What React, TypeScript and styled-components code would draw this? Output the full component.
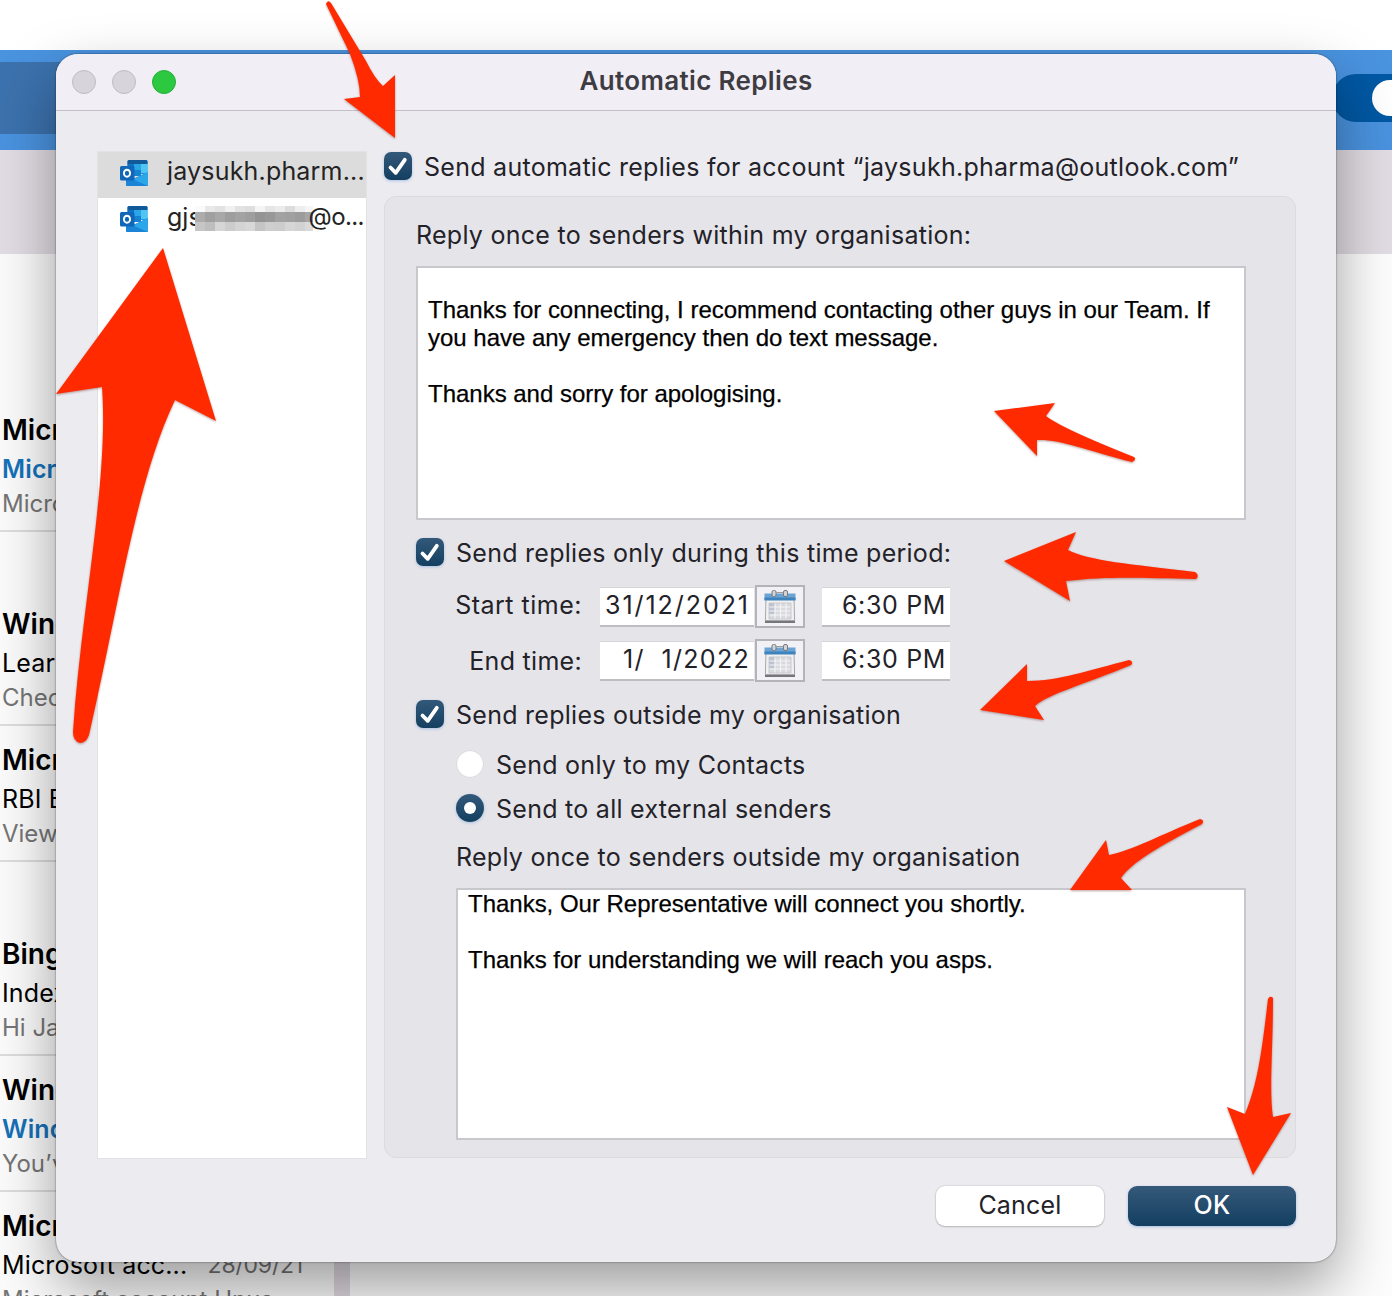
import React from 'react';
import styled, { createGlobalStyle, css } from 'styled-components';

const GlobalStyle = createGlobalStyle`
  * { box-sizing: border-box; }
  body { margin: 0; background: #fff; }
`;

const ui = css`font-family: Inter, 'Liberation Sans', sans-serif;`;

const Screen = styled.div`
  ${ui}
  position: relative;
  width: 1392px;
  height: 1296px;
  overflow: hidden;
  background: #fff;
  color: #232228;
`;

/* Mail window behind the dialog */
const MailWindow = styled.div`
  display: flex;
  flex-direction: column;
  height: 100%;
  padding-top: 50px;
`;
const MailHeader = styled.div`
  display: flex;
  justify-content: space-between;
  height: 100px;
  flex: none;
  background: #4a93df;
`;
const SearchField = styled.div`
  width: 400px;
  height: 72px;
  margin-top: 12px;
  background: #3c72ae;
`;
const Toggle = styled.div`
  display: flex;
  align-items: center;
  justify-content: flex-end;
  width: 82px;
  height: 48px;
  margin: 24px -22px 0 0;
  padding-right: 6px;
  border-radius: 24px;
  background: #0058a4;
`;
const Knob = styled.div`
  width: 36px;
  height: 36px;
  border-radius: 50%;
  background: #fff;
`;
const Ribbon = styled.div`
  height: 104px;
  flex: none;
  background: #e2dde4;
`;
const MailBody = styled.div`
  display: flex;
  flex: 1;
  min-height: 0;
  overflow: hidden;
`;
const MessageList = styled.div`
  width: 334px;
  flex: none;
  padding-top: 142px;
  background: #fbfbfb;
`;
const Splitter = styled.div`
  width: 16px;
  flex: none;
  background: #e0d9e1;
`;
const ReadingPane = styled.div`
  flex: 1;
  background: #fdfdfd;
`;
const Message = styled.div<{ $gap?: boolean }>`
  height: 136px;
  margin-top: ${p => (p.$gap ? 58 : 0)}px;
  padding: 14px 0 0 2px;
  border-bottom: 2px solid #dcdcdc;
  white-space: nowrap;
  overflow: hidden;
`;
const Sender = styled.div`
  height: 40px;
  line-height: 40px;
  font-size: 28px;
  font-weight: 600;
  color: #000;
`;
const SubjectRow = styled.div<{ $unread?: boolean }>`
  display: flex;
  justify-content: space-between;
  height: 38px;
  padding-right: 31px;
  line-height: 38px;
  font-size: 25px;
  letter-spacing: 0.15px;
  font-weight: ${p => (p.$unread ? 600 : 400)};
  color: ${p => (p.$unread ? '#1571b9' : '#000')};
`;
const MessageDate = styled.span`
  font-size: 23px;
  letter-spacing: -0.2px;
  color: #737373;
`;
const Preview = styled.div`
  height: 32px;
  line-height: 32px;
  font-size: 24px;
  color: #757575;
`;

/* Dialog */
const Dialog = styled.div`
  position: absolute;
  left: 56px;
  top: 54px;
  display: flex;
  flex-direction: column;
  width: 1280px;
  height: 1208px;
  border-radius: 22px;
  background: #ecebf0;
  box-shadow: 0 0 2px rgba(0, 0, 0, 0.6), 0 26px 60px rgba(0, 0, 0, 0.38);
`;
const TitleBar = styled.div`
  display: grid;
  grid-template-columns: 1fr auto 1fr;
  align-items: center;
  height: 57px;
  padding: 0 16px;
  border-bottom: 1px solid #c3bfc6;
  border-radius: 22px 22px 0 0;
  background: #f1eef5;
`;
const Lights = styled.div`
  display: flex;
  gap: 16px;
`;
const Light = styled.div<{ $on?: boolean }>`
  width: 24px;
  height: 24px;
  border-radius: 50%;
  border: 1px solid ${p => (p.$on ? '#25ae39' : '#c1bcc3')};
  background: ${p => (p.$on ? '#2bc840' : '#d8d4dc')};
`;
const Title = styled.div`
  margin-top: -3px;
  font-size: 26px;
  font-weight: 600;
  letter-spacing: 0.35px;
  line-height: 30px;
  color: #3e3c42;
`;
const Content = styled.div`
  display: flex;
  gap: 17px;
  height: 1048px;
  padding: 40px 40px 0 41px;
`;
const Accounts = styled.div`
  width: 270px;
  height: 1008px;
  border: 1px solid #e2e1e5;
  background: #fff;
`;
const Account = styled.div<{ $selected?: boolean }>`
  display: flex;
  align-items: center;
  height: 46px;
  padding-left: 21px;
  font-size: 25px;
  color: #232323;
  white-space: nowrap;
  background: ${p => (p.$selected ? '#dcdcdc' : '#fff')};
  svg { flex: none; margin-top: -4px; }
`;
const AccountName = styled.div<{ $spacing: number }>`
  display: flex;
  align-items: center;
  height: 32px;
  margin: -8px 0 0 18px;
  line-height: 32px;
  letter-spacing: ${p => p.$spacing}px;
`;
const NameTail = styled.span`
  font-size: 24px;
  letter-spacing: -0.6px;
`;
const Mosaic = styled.div`
  display: grid;
  grid-template-columns: repeat(12, 10px);
  grid-template-rows: 6px 10px 9px;
  flex: none;
  width: 118px;
  height: 25px;
  margin: 3px -4px 0 -7px;
  overflow: hidden;
`;
const Tile = styled.div<{ $shade: number }>`
  background: rgb(${p => p.$shade}, ${p => p.$shade}, ${p => p.$shade});
`;
const Settings = styled.div`
  display: flex;
  flex-direction: column;
  width: 912px;
`;
const Row = styled.div<{ $top?: number; $indent?: number; $h?: number }>`
  display: flex;
  align-items: center;
  flex: none;
  height: ${p => p.$h ?? 44}px;
  margin-top: ${p => p.$top ?? 0}px;
  margin-left: ${p => p.$indent ?? 0}px;
  gap: 12px;
`;
const Label = styled.span<{ $spacing?: number; $drop?: number }>`
  padding-top: ${p => p.$drop ?? 0}px;
  font-size: 25px;
  line-height: 32px;
  letter-spacing: ${p => p.$spacing ?? 0.27}px;
  white-space: pre;
  color: #232228;
`;
const Box = styled.span`
  display: flex;
  align-items: center;
  justify-content: center;
  width: 28px;
  height: 28px;
  border-radius: 7px;
  background: linear-gradient(#33597a, #143f61);
  box-shadow: 0 1px 3px rgba(110, 160, 220, 0.5);
`;
const Radio = styled.span<{ $on?: boolean }>`
  display: flex;
  align-items: center;
  justify-content: center;
  width: 28px;
  height: 28px;
  margin-top: -2px;
  border-radius: 50%;
  background: ${p => (p.$on ? 'linear-gradient(#33597a, #143f61)' : '#fff')};
  box-shadow: ${p => (p.$on ? '0 1px 3px rgba(110,160,220,.5)' : 'inset 0 0 1px 1px #d6d5d9')};
  &::after {
    content: '';
    width: 12px;
    height: 12px;
    border-radius: 50%;
    background: #fff;
  }
`;
const Group = styled.div`
  display: flex;
  flex-direction: column;
  height: 962px;
  padding: 16px 49px 0 31px;
  border: 1px solid #dbdadf;
  border-radius: 12px;
  background: #e5e4e9;
`;
const Reply = styled.div<{ $h: number; $pad: number; $indent?: number }>`
  flex: none;
  height: ${p => p.$h}px;
  margin: 9px 0 0 ${p => p.$indent ?? 0}px;
  padding: ${p => p.$pad}px 0 0 10px;
  border: 2px solid #c8c7cb;
  background: #fff;
  font-family: 'Liberation Sans', Arial, sans-serif;
  font-size: 24px;
  line-height: 28px;
  letter-spacing: -0.015px;
  color: #000;
  -webkit-text-stroke: 0.25px #000;
  white-space: pre;
`;
const TimeRow = styled.div`
  display: flex;
  align-items: center;
  flex: none;
  height: 43px;
  margin-top: 11px;
`;
const TimeLabel = styled.div<{ $lift: number }>`
  width: 166px;
  margin: 0 18px ${p => p.$lift}px 0;
  text-align: right;
`;
const Field = styled.div<{ $w: number; $spacing: number }>`
  width: ${p => p.$w}px;
  height: 40px;
  padding-right: 4px;
  border-top: 1px solid #d5d4d8;
  border-bottom: 2px solid #bebdc1;
  background: #fff;
  text-align: right;
  font-size: 25px;
  line-height: 34px;
  letter-spacing: ${p => p.$spacing}px;
  white-space: pre;
`;
const CalendarButton = styled.div`
  display: flex;
  align-items: center;
  justify-content: center;
  width: 50px;
  height: 43px;
  margin: 0 17px 0 1px;
  border: 2px solid #b4b3b8;
  background: #f2f1f6;
`;
const Footer = styled.div`
  display: flex;
  justify-content: flex-end;
  gap: 24px;
  padding: 27px 40px 0;
`;
const Button = styled.div<{ $primary?: boolean }>`
  width: 168px;
  height: 40px;
  border-radius: 9px;
  text-align: center;
  font-size: 25px;
  line-height: 38px;
  letter-spacing: 0.2px;
  font-weight: ${p => (p.$primary ? 500 : 400)};
  color: ${p => (p.$primary ? '#fff' : '#232228')};
  background: ${p => (p.$primary ? 'linear-gradient(#35597a, #133f61)' : '#fff')};
  box-shadow: ${p => (p.$primary ? '0 1px 3px rgba(110,150,210,.55)' : '0 0 2px rgba(0,0,0,.22), 0 1px 2px rgba(0,0,0,.18)')};
`;
const Arrows = styled.svg`
  position: absolute;
  left: 0;
  top: 0;
  filter: drop-shadow(0 1px 1px rgba(90, 20, 10, 0.4));
`;

const Check = () => (
  <Box>
    <svg width="28" height="28" viewBox="0 0 28 28">
      <path d="M6.500 15.500 11.700 20.800 20.800 7.800" fill="none" stroke="#fff" strokeWidth="3.800" strokeLinecap="round" strokeLinejoin="round" />
    </svg>
  </Box>
);

const OutlookIcon = () => (
  <svg width="30" height="28" viewBox="0 0 30 28">
    <path d="M10 1h17a1.500 1.500 0 0 1 1.500 1.500V15H8.500V2.500A1.500 1.500 0 0 1 10 1z" fill="#2492de" />
    <path d="M10 1h17a1.500 1.500 0 0 1 1.500 1.500V5h-20V2.500A1.500 1.500 0 0 1 10 1z" fill="#12599a" />
    <path d="M8.500 5H15v9H8.500z" fill="#1272c2" />
    <path d="M15 5h7v9h-7z" fill="#2aa5e8" />
    <path d="M22 5h6.500v9H22z" fill="#4fc6f2" />
    <path d="M15 11h7v6h-7z" fill="#1683d2" />
    <path d="M29 13v12.500a1.500 1.500 0 0 1-1.500 1.500H8.500A1.500 1.500 0 0 1 7 25.500V19l9 0z" fill="#1b8ddd" />
    <path d="M29 13v12.500a1.500 1.500 0 0 1-1.500 1.500H10l5-7z" fill="#2ba6e9" />
    <path d="M14 20.500 29 27H8.500A1.500 1.500 0 0 1 7 25.500V21z" fill="#1b84d6" />
    <rect x="1" y="7" width="14.500" height="14.500" rx="1.500" fill="#1066b8" />
    <ellipse cx="8" cy="14.200" rx="3.100" ry="3.500" fill="none" stroke="#fff" strokeWidth="1.900" />
  </svg>
);

const CalendarIcon = () => (
  <svg width="34" height="36" viewBox="0 0 34 36">
    <path d="M2 31h30v3H2z" fill="#77777b" />
    <path d="M3 9h28l.6 22.500H2.400z" fill="#f1f1f2" stroke="#a7a6a9" />
    <path d="M1.500 4.500h31V11h-31z" fill="#6ba3d3" />
    <path d="M1.500 8.500h31v3h-31z" fill="#3f83bd" />
    <path d="M6 14h22v16H6z" fill="#d9dade" />
    <path d="M6 14h6v11H6z" fill="#bcc3d2" />
    <path d="M6 18h22M6 22h22M6 26h22M12 14v16M17.500 14v16M23 14v16" stroke="#f4f4f6" strokeWidth="1.200" />
    <path d="M6 14h22v16H6z" fill="none" stroke="#c2c3c8" strokeWidth=".8" />
    <g fill="#d3d5d6" stroke="#77797d">
      <rect x="9" y="1.500" width="4" height="6" rx="1.500" />
      <rect x="20.500" y="1.500" width="4" height="6" rx="1.500" />
    </g>
    <path d="M13 3.500h7.500" stroke="#9b9da1" />
  </svg>
);

const arrowPaths = [
  'M326 4Q328 -1 331 3L366 61Q375 79 383 86L395 75V138L344 99L360 97Q360 80 350 54Z',
  'M163 248L216 421L175 400C136 482 120 600 89 735Q86 743 80 743Q73 741 73 732C81 610 109 480 102 387L56 394Z',
  'M994 411L1055 403L1046 416Q1061 428 1134 457Q1137 460 1132 462C1085 450 1060 439 1037 440V456Z',
  'M1004 561L1076 532L1068 550C1090 561 1130 564 1195 572Q1200 575 1196 579C1140 578 1110 576 1066 581L1070 601Z',
  'M980 710L1027 664V681C1058 681 1090 670 1129 660Q1134 661 1131 665C1083 685 1050 693 1035 706L1044 720Z',
  'M1070 890L1106 840L1109 855C1133 850 1160 835 1200 819Q1205 820 1202 824C1160 846 1132 862 1121 878L1132 890Z',
  'M1253 1175L1227 1107L1245 1114C1258 1083 1262 1050 1268 999Q1270 995 1273 998C1273 1050 1269 1090 1273 1117L1291 1113Z',
];

const tiles = [
  250, 232, 226, 240, 226, 222, 244, 230, 236, 220, 238, 246,
  172, 160, 168, 158, 163, 158, 148, 152, 162, 160, 156, 166,
  198, 190, 214, 204, 212, 216, 196, 206, 204, 214, 210, 218,
];

type Mail = { sender: string; subject: string; preview: string; unread?: boolean; gap?: boolean; date?: string };
const mails: Mail[] = [
  { sender: 'Microsoft', subject: 'Microsoft', preview: 'Microsoft', unread: true },
  { sender: 'Windows', subject: 'Learn', preview: 'Check', gap: true },
  { sender: 'Microsoft', subject: 'RBI E', preview: 'View' },
  { sender: 'Bing', subject: 'Index', preview: 'Hi Jay', gap: true },
  { sender: 'Windows', subject: 'Windows', preview: 'You’ve', unread: true },
  { sender: 'Microsoft', subject: 'Microsoft acc...', preview: 'Microsoft account Unus', date: '28/09/21' },
];

type TimeEntryProps = { label: string; date: string; time: string; labelSpacing: number; dateSpacing: number; lift?: number };
const TimeEntry = ({ label, date, time, labelSpacing, dateSpacing, lift = 0 }: TimeEntryProps) => (
  <TimeRow>
    <TimeLabel $lift={lift}><Label $spacing={labelSpacing}>{label}</Label></TimeLabel>
    <Field $w={154} $spacing={dateSpacing}>{date}</Field>
    <CalendarButton><CalendarIcon /></CalendarButton>
    <Field $w={128} $spacing={0.65}>{time}</Field>
  </TimeRow>
);

export default function App() {
  return (
    <Screen>
      <GlobalStyle />
      <MailWindow>
        <MailHeader>
          <SearchField />
          <Toggle><Knob /></Toggle>
        </MailHeader>
        <Ribbon />
        <MailBody>
          <MessageList>
            {mails.map((m, i) => (
              <Message key={i} $gap={m.gap}>
                <Sender>{m.sender}</Sender>
                <SubjectRow $unread={m.unread}>
                  <span>{m.subject}</span>
                  {m.date && <MessageDate>{m.date}</MessageDate>}
                </SubjectRow>
                <Preview>{m.preview}</Preview>
              </Message>
            ))}
          </MessageList>
          <Splitter />
          <ReadingPane />
        </MailBody>
      </MailWindow>

      <Dialog>
        <TitleBar>
          <Lights><Light /><Light /><Light $on /></Lights>
          <Title>Automatic Replies</Title>
        </TitleBar>
        <Content>
          <Accounts>
            <Account $selected>
              <OutlookIcon />
              <AccountName $spacing={0.18}>jaysukh.pharm...</AccountName>
            </Account>
            <Account>
              <OutlookIcon />
              <AccountName $spacing={0}>
                gjs
                <Mosaic>{tiles.map((s, i) => <Tile key={i} $shade={s} />)}</Mosaic>
                <NameTail>@o...</NameTail>
              </AccountName>
            </Account>
          </Accounts>
          <Settings>
            <Row $h={30}><Check /><Label $drop={2}>Send automatic replies for account “jaysukh.pharma@outlook.com”</Label></Row>
            <Row $h={15} />
            <Group>
              <Row><Label>Reply once to senders within my organisation:</Label></Row>
              <Reply $h={254} $pad={28}>
                {'Thanks for connecting, I recommend contacting other guys in our Team. If\nyou have any emergency then do text message.\n\nThanks and sorry for apologising.'}
              </Reply>
              <Row $top={10}><Check /><Label $drop={2}>Send replies only during this time period:</Label></Row>
              <TimeEntry label="Start time:" date="31/12/2021" time="6:30 PM" labelSpacing={0.5} dateSpacing={1.95} lift={4} />
              <TimeEntry label="End time:" date="1/  1/2022" time="6:30 PM" labelSpacing={0.3} dateSpacing={1.3} />
              <Row $top={10}><Check /><Label $drop={2}>Send replies outside my organisation</Label></Row>
              <Row $top={7} $indent={40}><Radio /><Label>Send only to my Contacts</Label></Row>
              <Row $indent={40}><Radio $on /><Label>Send to all external senders</Label></Row>
              <Row $top={4} $indent={40}><Label>Reply once to senders outside my organisation</Label></Row>
              <Reply $h={252} $pad={0} $indent={40}>
                {'Thanks, Our Representative will connect you shortly.\n\nThanks for understanding we will reach you asps.'}
              </Reply>
            </Group>
          </Settings>
        </Content>
        <Footer>
          <Button>Cancel</Button>
          <Button $primary>OK</Button>
        </Footer>
      </Dialog>

      <Arrows width="1392" height="1296" viewBox="0 0 1392 1296">
        {arrowPaths.map((d, i) => <path key={i} d={d} fill="#ff2a00" />)}
      </Arrows>
    </Screen>
  );
}
